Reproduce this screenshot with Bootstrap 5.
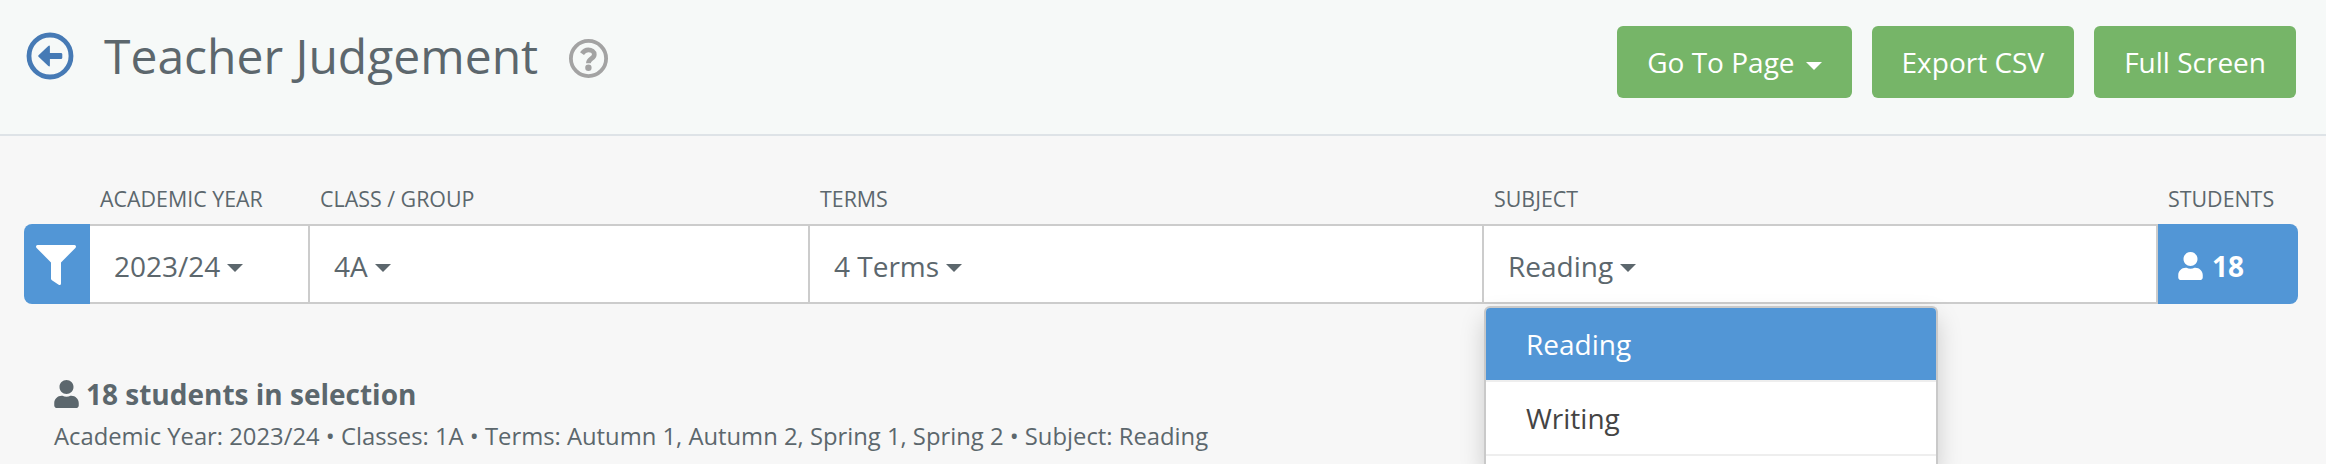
<!DOCTYPE html>
<html lang="en">
<head>
<meta charset="utf-8">
<title>Teacher Judgement</title>
<link rel="stylesheet" href="https://cdn.jsdelivr.net/npm/bootstrap@5.3.0/dist/css/bootstrap.min.css">
<style>
  body { font-family: "Open Sans", "Noto Sans", sans-serif; font-size: 28px; line-height: 40px; color: #5c676d; background: #f7f7f7; height: 464px; overflow: hidden; }
  svg { display: block; flex: none; }
  .page-head { height: 136px; background: #f6f9f8; border-bottom: 2px solid #dee3e7; padding: 26px 30px 0 26px; }
  .page-title { font-size: 48px; line-height: 66px; font-weight: 400; margin: -3px 31px 0 30px; }
  .back-icon { margin-top: 6px; color: #467ab5; }
  .help-icon { margin-top: 13px; color: #a3a3a3; }
  .head-actions { gap: 20px; }
  .btn-action { --bs-btn-color: #fff; --bs-btn-bg: #76b568; --bs-btn-border-width: 0; --bs-btn-padding-x: 30px; --bs-btn-padding-y: 17px; --bs-btn-font-size: 28px; --bs-btn-line-height: 38px; --bs-btn-border-radius: 6px; height: 72px; }
  .tri { display: inline-block; border: 8px solid transparent; border-top-color: currentColor; border-bottom: 0; }
  .btn-action .tri { margin-left: 11px; vertical-align: 3px; }
  .filter-grid { display: grid; grid-template-columns: 66px 220px 500px 674px 674px 140px; margin: 44px 28px 0 24px; }
  .filter-label { font-size: 21.4px; line-height: 30px; padding: 4px 0 0 10px; height: 44px; white-space: nowrap; }
  .filter-cell { height: 80px; background: #fff; border: solid #ccc; border-width: 2px 2px 2px 0; padding: 3px 0 0 24px; }
  .filter-cell .tri { margin: 4px 0 0 7px; }
  .filter-end { height: 80px; background: #5296d6; color: #fff; }
  .end-left { border-radius: 8px 0 0 8px; padding: 2px 0 0 12px; }
  .end-right { border-radius: 0 8px 8px 0; padding: 3px 0 0 20px; }
  .end-right span { padding-left: 9px; }
  .subject-menu { --bs-dropdown-border-width: 0; top: 82px; left: 0; width: 454px; height: 158px; padding: 0; font-size: 28px; border: 2px solid #c9c9c9; border-bottom: 0; border-radius: 6px 6px 0 0; overflow: hidden; box-shadow: 0 12px 24px rgba(0,0,0,.175); }
  .subject-menu .dropdown-item { height: 74px; padding: 16px 40px; color: #444; border-bottom: 2px solid #eee; }
  .subject-menu .dropdown-item.active { color: #fff; background: #5296d6; background-clip: padding-box; }
  .summary { padding: 70px 0 0 54px; }
  .summary-count span { padding-left: 7px; }
  .summary-detail { font-size: 23.8px; line-height: 36px; margin: 4px 0 0; }
</style>
</head>
<body>
<svg class="d-none">
  <symbol id="user" viewBox="0 0 448 512"><path fill="currentColor" d="M224 256c70.700 0 128-57.300 128-128S294.700 0 224 0 96 57.300 96 128s57.300 128 128 128zm89.600 32h-16.700c-22.200 10.200-46.900 16-72.900 16s-50.600-5.800-72.900-16h-16.700C60.200 288 0 348.200 0 422.400V464c0 26.500 21.500 48 48 48h352c26.500 0 48-21.500 48-48v-41.600c0-74.200-60.200-134.400-134.400-134.400z"/></symbol>
</svg>
<header class="page-head d-flex align-items-start">
  <svg class="back-icon" width="48" height="48" viewBox="0 0 48 48"><circle cx="24" cy="24" r="21" fill="none" stroke="currentColor" stroke-width="4.800"/><path fill="currentColor" d="M12.500 23.300 22.300 13.900q1.600-1.100 1.600.8V20.900h11q1.400 0 1.400 1.300v3.600q0 1.300-1.400 1.300h-11v6.200q0 1.900-1.600.8L12.500 24.700q-.7-.7 0-1.400z"/></svg>
  <h1 class="page-title">Teacher Judgement</h1>
  <svg class="help-icon" width="39" height="39" viewBox="0 0 39 39"><circle cx="19.500" cy="19.500" r="17.600" fill="none" stroke="currentColor" stroke-width="3.800"/><path fill="none" stroke="currentColor" stroke-width="4.700" d="M13 14.600C14.700 12 16.600 10.800 19.300 10.800c3.300 0 6 1.900 6 4.600 0 4.300-5.900 4.300-5.900 8.800"/><circle cx="19.400" cy="28.700" r="3.200" fill="currentColor"/></svg>
  <div class="head-actions d-flex ms-auto">
    <button class="btn btn-action" type="button">Go To Page<span class="tri"></span></button>
    <button class="btn btn-action" type="button">Export CSV</button>
    <button class="btn btn-action" type="button">Full Screen</button>
  </div>
</header>
<main>
  <section class="filter-grid">
    <div></div>
    <div class="filter-label">ACADEMIC YEAR</div>
    <div class="filter-label">CLASS / GROUP</div>
    <div class="filter-label">TERMS</div>
    <div class="filter-label">SUBJECT</div>
    <div class="filter-label">STUDENTS</div>
    <div class="filter-end end-left d-flex align-items-center"><svg width="40" height="40" viewBox="0 0 40 40"><path fill="currentColor" d="M1.500 0h37q1.500 0 1.500 1.500 0 .9-.6 1.500L25 17.400V38.500q0 1.500-1.300 1.500-.5 0-1-.3l-6.800-4.500q-.9-.7-.9-1.800V17.400L.6 3Q0 2.400 0 1.500 0 0 1.500 0z"/></svg></div>
    <div class="filter-cell d-flex align-items-center">2023/24<span class="tri"></span></div>
    <div class="filter-cell d-flex align-items-center">4A<span class="tri"></span></div>
    <div class="filter-cell d-flex align-items-center">4 Terms<span class="tri"></span></div>
    <div class="position-relative">
      <div class="filter-cell d-flex align-items-center">Reading<span class="tri"></span></div>
      <div class="dropdown-menu subject-menu show">
        <a class="dropdown-item active">Reading</a>
        <a class="dropdown-item">Writing</a>
      </div>
    </div>
    <div class="filter-end end-right d-flex align-items-center fw-bold"><svg width="25" height="28"><use href="#user"/></svg><span>18</span></div>
  </section>
  <section class="summary">
    <div class="summary-count d-flex align-items-center fw-bold"><svg width="25" height="28"><use href="#user"/></svg><span>18 students in selection</span></div>
    <p class="summary-detail">Academic Year: 2023/24 • Classes: 1A • Terms: Autumn 1, Autumn 2, Spring 1, Spring 2 • Subject: Reading</p>
  </section>
</main>
<script src="https://cdn.jsdelivr.net/npm/bootstrap@5.3.0/dist/js/bootstrap.bundle.min.js"></script>
</body>
</html>
